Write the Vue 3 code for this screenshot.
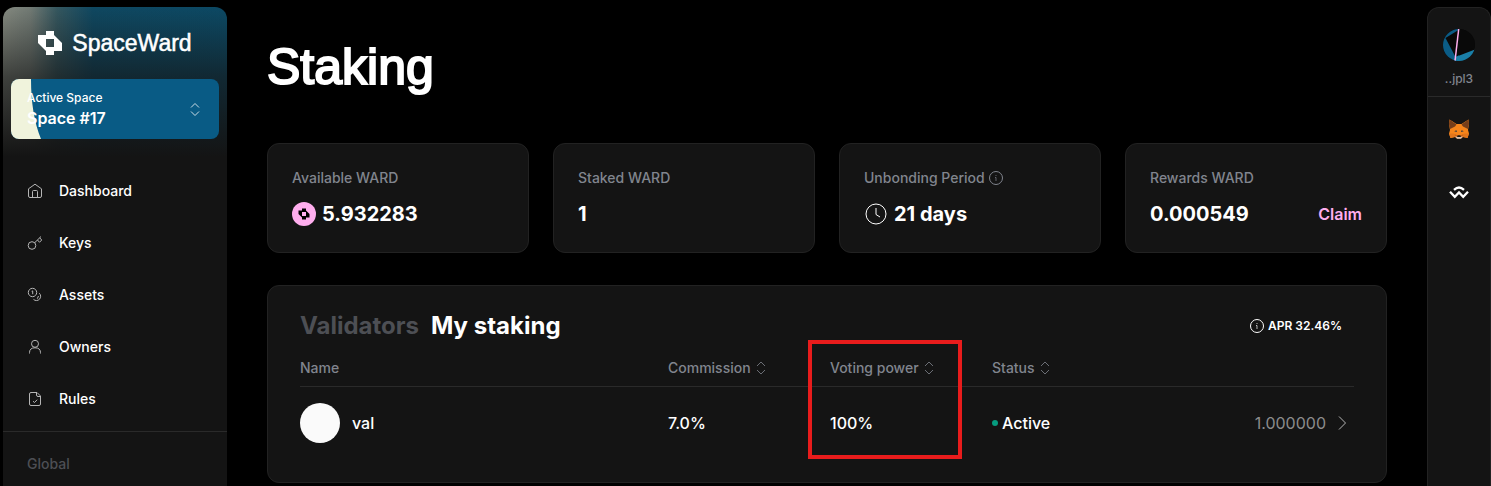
<script setup>
const navItems = [
  { label: 'Dashboard', icon: 'home' },
  { label: 'Keys', icon: 'key' },
  { label: 'Assets', icon: 'coins' },
  { label: 'Owners', icon: 'user' },
  { label: 'Rules', icon: 'file' },
]

const columns = [
  { label: 'Commission', key: 'commission' },
  { label: 'Voting power', key: 'voting', marked: true },
  { label: 'Status', key: 'status' },
]

const validators = [
  { name: 'val', commission: '7.0%', voting: '100%', status: 'Active', amount: '1.000000' },
]
</script>

<template>
  <div class="layout">
    <aside class="sidebar">
      <a class="brand" href="#">
        <svg width="24" height="24" viewBox="0 0 24 24" fill="#fff" aria-hidden="true">
          <path fill-rule="evenodd" d="M8 0h8v4l8 8v8h-8v4H8v-4L0 12V4h8zM8 8v8h8V8z" />
        </svg>
        <span>SpaceWard</span>
      </a>

      <button class="space" type="button">
        <svg class="space-art" width="30" height="60" viewBox="0 0 30 60" aria-hidden="true">
          <path d="M0 0H20Q20 36 30 60H0Z" fill="#f0f3dc" />
        </svg>
        <span class="space-text">
          <small>Active Space</small>
          <strong>Space #17</strong>
        </span>
        <svg class="sort" width="16" height="16" viewBox="0 0 16 16" aria-hidden="true">
          <path d="M4 6.500l4-4 4 4M4 10.500l4 4 4-4" />
        </svg>
      </button>

      <nav class="nav">
        <a v-for="item in navItems" :key="item.label" href="#">
          <svg width="16" height="16" viewBox="0 0 16 16" aria-hidden="true">
            <template v-if="item.icon === 'home'">
              <path d="M1.500 5.800L8 1.200l6.500 4.600V13q0 1.500-1.500 1.500H3Q1.500 14.500 1.500 13Z" />
              <path d="M5.500 14.500V8.500Q5.500 7.500 6.500 7.500h3q1 0 1 1v6" />
            </template>
            <template v-else-if="item.icon === 'key'">
              <circle cx="5" cy="10.500" r="3.800" />
              <path d="M7.700 7.700L14 1.500M10.500 5l2 2.300 2.200-2.300-2-2.200" />
            </template>
            <template v-else-if="item.icon === 'coins'">
              <circle cx="5.500" cy="5.500" r="4.200" />
              <path d="M4.700 4.300l1-.4v3.300M12.300 6.200a4.200 4.200 0 1 1-5.800 6.200M11.500 9l-1.200 2.700" />
            </template>
            <template v-else-if="item.icon === 'user'">
              <circle cx="8" cy="4.800" r="3.500" />
              <path d="M2.500 14.500v-.8Q2.500 8.800 8 8.800t5.500 4.900v.8" />
            </template>
            <template v-else>
              <path d="M4 1.500h6l3.500 3.500v8q0 1.500-1.500 1.500H4Q2.500 14.500 2.500 13V3Q2.500 1.500 4 1.500ZM9.500 1.500V4q0 1.500 1.500 1.500h2.500M6 10.200l1.500 1.300 2.700-2.800" />
            </template>
          </svg>
          <span>{{ item.label }}</span>
        </a>
      </nav>

      <div class="nav-group">Global</div>
    </aside>

    <main class="main">
      <h1>Staking</h1>

      <section class="cards">
        <article class="card">
          <h2>Available WARD</h2>
          <div class="value">
            <svg width="24" height="24" viewBox="0 0 24 24" aria-hidden="true">
              <circle cx="12" cy="12" r="12" fill="#ffaeee" />
              <path fill="#000" fill-rule="evenodd" d="M10 6.500h4v2l3.500 3.500v3.500H14v2h-4v-2L6.500 12V8.500H10zM10 10v4h4v-4z" />
            </svg>
            <span>5.932283</span>
          </div>
        </article>
        <article class="card">
          <h2>Staked WARD</h2>
          <div class="value"><span>1</span></div>
        </article>
        <article class="card">
          <h2>
            Unbonding Period
            <svg class="info" width="14" height="14" viewBox="0 0 14 14" aria-hidden="true">
              <circle cx="7" cy="7" r="6.500" />
              <path class="faint" d="M7 4v1M6 6.500h1V10" />
            </svg>
          </h2>
          <div class="value">
            <svg class="clock" width="24" height="24" viewBox="0 0 24 24" aria-hidden="true">
              <circle cx="12" cy="12" r="10" />
              <path d="M12 6v6.500l4 2.500" />
            </svg>
            <span>21 days</span>
          </div>
        </article>
        <article class="card">
          <h2>Rewards WARD</h2>
          <div class="value">
            <span>0.000549</span>
            <button class="claim" type="button">Claim</button>
          </div>
        </article>
      </section>

      <section class="panel">
        <header class="panel-head">
          <div class="tabs">
            <button type="button">Validators</button>
            <button type="button" class="active">My staking</button>
          </div>
          <div class="apr">
            <svg class="info" width="14" height="14" viewBox="0 0 14 14" aria-hidden="true">
              <circle cx="7" cy="7" r="6.500" />
              <path class="faint" d="M7 4v1M6 6.500h1V10" />
            </svg>
            <span>APR 32.46%</span>
          </div>
        </header>

        <table>
          <colgroup>
            <col class="c-name" />
            <col class="c-mid" />
            <col class="c-mid" />
            <col />
            <col class="c-amount" />
          </colgroup>
          <thead>
            <tr>
              <th scope="col">Name</th>
              <th v-for="col in columns" :key="col.key" scope="col">
                <button type="button">
                  {{ col.label }}
                  <svg class="sort" width="16" height="16" viewBox="0 0 16 16" aria-hidden="true">
                    <path d="M4 6l4-4 4 4M4 10l4 4 4-4" />
                  </svg>
                </button>
                <span v-if="col.marked" class="marker"></span>
              </th>
              <th></th>
            </tr>
          </thead>
          <tbody>
            <tr v-for="v in validators" :key="v.name">
              <td><div class="who"><span class="avatar"></span>{{ v.name }}</div></td>
              <td>{{ v.commission }}</td>
              <td>{{ v.voting }}</td>
              <td><div class="status"><span class="dot"></span>{{ v.status }}</div></td>
              <td>
                <a class="amount" href="#">
                  {{ v.amount }}
                  <svg width="16" height="16" viewBox="0 0 16 16" aria-hidden="true">
                    <path d="M5 1.500l6.500 6.500L5 14.500" />
                  </svg>
                </a>
              </td>
            </tr>
          </tbody>
        </table>
      </section>
    </main>

    <aside class="rail">
      <button class="account" type="button">
        <svg width="32" height="32" viewBox="0 0 32 32" aria-hidden="true">
          <defs>
            <clipPath id="disc"><circle cx="16" cy="16" r="16" /></clipPath>
          </defs>
          <g clip-path="url(#disc)">
            <rect width="32" height="32" fill="#090909" />
            <path d="M0 0H16V32H0Z" fill="#0b5c86" />
            <path d="M15.500 1L2.500 9 12.500 28 32 18V0Z" fill="#090909" />
            <path d="M10 32l2.500-4L32 20.500V32Z" fill="#1a7fa8" />
            <path d="M15.700 0L12 32" stroke="#ffaeee" stroke-width="1.500" />
          </g>
        </svg>
        <span>..jpl3</span>
      </button>
      <div class="wallets">
        <button type="button" aria-label="MetaMask">
          <svg width="20" height="20" viewBox="0 0 20 20" aria-hidden="true">
            <path d="M.5.500L7.500 5h5L19.500.500 20 5l-1 6 1 3.500-1.500 4.500-4.500-1-2 1.500H8L6 18l-4.500 1L0 14.500 1 11 0 5Z" fill="#f6851b" />
            <path d="M.5.500L7.500 5.500 6 7.500 1 10 0 5ZM19.500.500L12.500 5.500 14 7.500l5 2.500 1-5Z" fill="#763e1a" />
            <path d="M5.200 14.500H0L1.500 19 6 18ZM14.800 14.500H20L18.500 19 14 18Z" fill="#e2761b" />
            <path d="M5.200 12.300l2.200-1 .6 1.600ZM14.800 12.300l-2.200-1-.6 1.600Z" fill="#233447" />
            <path d="M5.500 15l2.800 1.200L8 18l-2-.5ZM14.500 15l-2.800 1.200L12 18l2-.5Z" fill="#cd6116" />
            <path d="M6 17.500l2 .3h4l2-.3-2 2.200H8Z" fill="#d7c1b3" />
            <path d="M8.500 16.300h3l.4 1.600H8.100Z" fill="#161616" />
          </svg>
        </button>
        <button type="button" aria-label="Connect wallet">
          <svg width="20" height="20" viewBox="0 0 20 20" aria-hidden="true">
            <path d="M5 6.800Q10 2.200 15 6.800M1 8.800l4.800 5L10 9.500l4.200 4.300 4.800-5" fill="none" stroke="#fff" stroke-width="2.300" />
          </svg>
        </button>
      </div>
    </aside>
  </div>
</template>

<style>
body {
  background: #000;
}
</style>

<style scoped>
.layout {
  display: flex;
  box-sizing: border-box;
  height: 100vh;
  padding: 7px 0 0 3px;
  overflow: hidden;
  background: #000;
  color: #fff;
  font: 500 14px/20px Inter, sans-serif;
}
.layout * {
  box-sizing: border-box;
}
button {
  padding: 0;
  border: 0;
  background: none;
  color: inherit;
  font: inherit;
  text-align: left;
  cursor: pointer;
}
a {
  color: inherit;
  text-decoration: none;
}
svg {
  display: block;
  flex: none;
}
.sidebar {
  flex: none;
  width: 224px;
  border-radius: 12px 12px 0 0;
  background:
    linear-gradient(180deg, rgba(20, 20, 20, 0) 0, rgba(20, 20, 20, 0.62) 70px, #141414 150px),
    linear-gradient(90deg, #858a80 0, #717a74 28px, #35575f 54px, #0f4861 90px, #0c4964 100%);
}
.brand {
  display: flex;
  align-items: center;
  justify-content: center;
  gap: 10px;
  height: 72px;
  font-family: "Liberation Sans", Arial, sans-serif;
  font-size: 23px;
  line-height: 28px;
  -webkit-text-stroke: 0.5px currentColor;
}
.space {
  position: relative;
  display: flex;
  align-items: center;
  justify-content: space-between;
  width: 208px;
  height: 60px;
  margin: 0 8px 26px;
  padding: 0 16px;
  border-radius: 8px;
  overflow: hidden;
  background: #095b85;
}
.space-art {
  position: absolute;
  top: 0;
  left: 0;
}
.space-text {
  position: relative;
  display: flex;
  flex-direction: column;
}
.space-text small {
  font-size: 12px;
  line-height: 18px;
}
.space-text strong {
  font-size: 16px;
  font-weight: 600;
  line-height: 22px;
}
.sort {
  fill: none;
  stroke: currentColor;
  opacity: 0.8;
}
.nav {
  padding-bottom: 6px;
  border-bottom: 1px solid #2a2a2a;
}
.nav a {
  display: flex;
  align-items: center;
  gap: 16px;
  height: 52px;
  padding: 0 24px;
}
.nav svg {
  fill: none;
  stroke: #b5b5b5;
}
.nav-group {
  padding: 22px 24px;
  color: #4d4f54;
}
.main {
  flex: 1;
  min-width: 0;
  padding: 28px 40px 0;
}
h1 {
  margin: 0 0 44px;
  font-family: "Liberation Sans", Arial, sans-serif;
  font-size: 50px;
  font-weight: 400;
  line-height: 64px;
  -webkit-text-stroke: 2px currentColor;
}
.cards {
  display: grid;
  grid-template-columns: repeat(4, 1fr);
  gap: 24px;
  margin-bottom: 32px;
}
.card,
.panel {
  border: 1px solid #222;
  border-radius: 12px;
  background: #141414;
}
.card {
  padding: 24px;
}
.card h2 {
  display: flex;
  align-items: center;
  gap: 4px;
  margin: 0 0 12px;
  color: #81858e;
  font-size: 14px;
  font-weight: 500;
  line-height: 20px;
}
.value {
  display: flex;
  align-items: center;
  gap: 6px;
  font-size: 20px;
  font-weight: 700;
  line-height: 28px;
}
.info,
.clock {
  fill: none;
  stroke: currentColor;
}
.faint {
  opacity: 0.7;
}
.claim {
  margin-left: auto;
  color: #ffaeee;
  font-size: 16px;
  font-weight: 600;
}
.panel {
  padding: 24px 32px 23px;
}
.panel-head,
.tabs,
.apr {
  display: flex;
  align-items: center;
}
.panel-head {
  justify-content: space-between;
}
.tabs {
  gap: 12px;
  color: #4d4f54;
  font-size: 24px;
  font-weight: 700;
  line-height: 32px;
}
.tabs .active {
  color: #fff;
}
.apr {
  gap: 4px;
  padding-right: 12px;
  font-size: 12px;
  font-weight: 600;
}
table {
  width: 100%;
  table-layout: fixed;
  border-spacing: 0;
}
.c-name {
  width: 368px;
}
.c-mid {
  width: 162px;
}
.c-amount {
  width: 120px;
}
th {
  position: relative;
  padding: 16px 0 8px;
  border-bottom: 1px solid #2a2a2a;
  color: #81858e;
  font-weight: 500;
  text-align: left;
}
th button {
  display: flex;
  align-items: center;
  gap: 2px;
}
.marker {
  position: absolute;
  top: -2px;
  left: -22px;
  width: 154px;
  height: 119px;
  border: 4px solid #e81c1c;
  pointer-events: none;
}
td {
  padding: 16px 0;
  font-size: 16px;
  line-height: 24px;
}
.who,
.status,
.amount {
  display: flex;
  align-items: center;
}
.who {
  gap: 12px;
}
.avatar {
  width: 40px;
  height: 40px;
  border-radius: 50%;
  background: #fafafa;
}
.status {
  gap: 4px;
}
.dot {
  width: 6px;
  height: 6px;
  border-radius: 50%;
  background: #069c7f;
}
.amount {
  justify-content: flex-end;
  gap: 8px;
  padding-right: 4px;
  color: #8c8c8c;
  font-weight: 400;
}
.amount svg {
  fill: none;
  stroke: #b5b5b5;
}
.rail {
  flex: none;
  width: 64px;
  border: 1px solid #222;
  border-bottom: 0;
  border-radius: 12px 12px 0 0;
  background: #141414;
}
.account {
  display: flex;
  flex-direction: column;
  align-items: center;
  gap: 8px;
  width: 100%;
  padding: 21px 0 7px;
  border-bottom: 1px solid #2a2a2a;
  color: #81858e;
  font-size: 12px;
  font-weight: 500;
}
.wallets {
  display: flex;
  flex-direction: column;
  align-items: center;
  gap: 44px;
  padding-top: 22px;
}
</style>
